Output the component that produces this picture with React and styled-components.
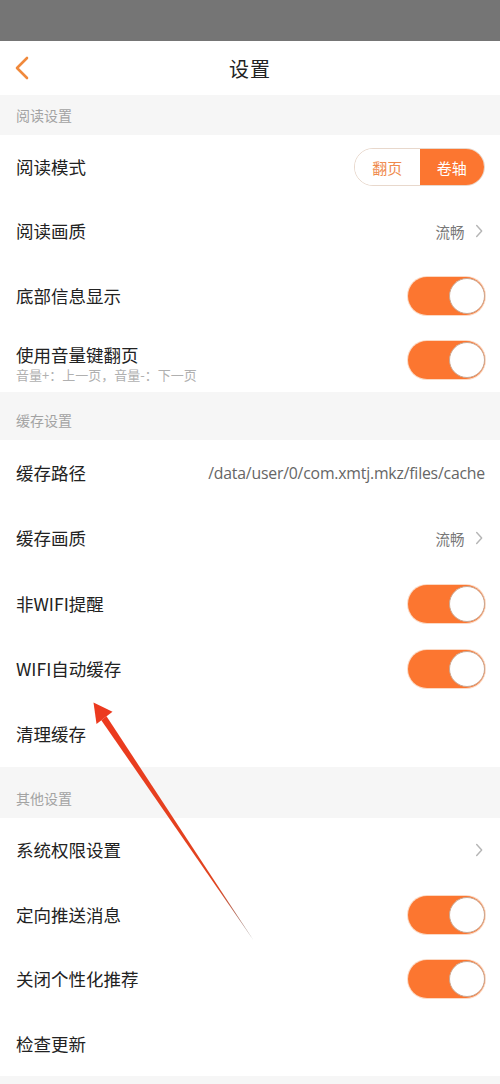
import React from "react";
import styled, { createGlobalStyle } from "styled-components";

const GlobalStyle = createGlobalStyle`
  html, body {
    margin: 0;
    padding: 0;
    background: #f6f6f6;
  }
  body {
    font-family: "Noto Sans CJK SC", "Noto Sans", sans-serif;
  }
`;

const ORANGE = "#fc7630";

const sections = [
  {
    title: "阅读设置",
    gap: 0,
    rowHeight: 64.3,
    rows: [
      { label: "阅读模式", type: "segment" },
      { label: "阅读画质", type: "value", value: "流畅" },
      { label: "底部信息显示", type: "toggle" },
      { label: "使用音量键翻页", sub: "音量+：上一页，音量-：下一页", type: "toggle" },
    ],
  },
  {
    title: "缓存设置",
    gap: 8,
    rowHeight: 65.4,
    rows: [
      { label: "缓存路径", type: "path", value: "/data/user/0/com.xmtj.mkz/files/cache" },
      { label: "缓存画质", type: "value", value: "流畅" },
      { label: "非WIFI提醒", type: "toggle" },
      { label: "WIFI自动缓存", type: "toggle" },
      { label: "清理缓存" },
    ],
  },
  {
    title: "其他设置",
    gap: 11,
    rowHeight: 64.5,
    rows: [
      { label: "系统权限设置", type: "chevron" },
      { label: "定向推送消息", type: "toggle" },
      { label: "关闭个性化推荐", type: "toggle" },
      { label: "检查更新" },
    ],
  },
];

const Chevron = ({ color = "#b5b5b5", size = 14 }) => (
  <svg width={size * 0.6} height={size} viewBox="0 0 8 14" fill="none">
    <path d="M1.5 1.5 L6.5 7 L1.5 12.5" stroke={color} strokeWidth="1.4" strokeLinecap="round" strokeLinejoin="round" />
  </svg>
);

const App = () => {
  return (
    <Page>
      <GlobalStyle />
      <StatusBar />
      <Header>
        <BackButton>
          <svg width="16" height="24" viewBox="0 0 16 24" fill="none">
            <path d="M13 2 L3 12 L13 22" stroke="#f0893c" strokeWidth="2.6" strokeLinecap="round" strokeLinejoin="round" />
          </svg>
        </BackButton>
        <Title>设置</Title>
      </Header>
      {sections.map((section) => (
        <Section key={section.title}>
          <SectionTitle $gap={section.gap}>{section.title}</SectionTitle>
          <List>
            {section.rows.map((row) => (
              <Row key={row.label} $h={section.rowHeight}>
                <LabelBlock>
                  <Label>{row.label}</Label>
                  {row.sub && <Sub>{row.sub}</Sub>}
                </LabelBlock>
                {row.type === "segment" && (
                  <Segment>
                    <SegItem>翻页</SegItem>
                    <SegItem $active>卷轴</SegItem>
                  </Segment>
                )}
                {row.type === "value" && (
                  <Value>
                    {row.value}
                    <Chevron />
                  </Value>
                )}
                {row.type === "chevron" && (
                  <Value>
                    <Chevron />
                  </Value>
                )}
                {row.type === "path" && <Path>{row.value}</Path>}
                {row.type === "toggle" && (
                  <Toggle>
                    <Knob />
                  </Toggle>
                )}
              </Row>
            ))}
          </List>
        </Section>
      ))}
      <Footer />
      <Arrow width="500" height="1084" viewBox="0 0 500 1084">
        <defs>
          <linearGradient id="shaft" x1="104" y1="718" x2="254" y2="941" gradientUnits="userSpaceOnUse">
            <stop offset="0" stopColor="#ec3a1f" />
            <stop offset="0.75" stopColor="#e0441f" />
            <stop offset="1" stopColor="#8a8a8a" />
          </linearGradient>
        </defs>
        <polygon points="106.5,716.3 101.3,720.2 254,941" fill="url(#shaft)" />
        <polygon points="93.5,702.5 112.5,711.8 96.5,724" fill="#ec3a1f" />
      </Arrow>
    </Page>
  );
};

export default App;

const Page = styled.div`
  position: relative;
  width: 500px;
  height: 1084px;
  overflow: hidden;
  background: #f6f6f6;
`;

const StatusBar = styled.div`
  height: 41px;
  background: #757575;
`;

const Header = styled.div`
  height: 54px;
  background: #fff;
  display: flex;
  align-items: center;
  justify-content: center;
  position: relative;
`;

const BackButton = styled.div`
  position: absolute;
  left: 14px;
  top: 15px;
  display: flex;
`;

const Title = styled.div`
  font-size: 20px;
  color: #222;
  letter-spacing: 1px;
`;

const Section = styled.div`
  display: flex;
  flex-direction: column;
`;

const SectionTitle = styled.div`
  height: 40px;
  padding-top: ${(p) => p.$gap}px;
  padding-left: 16px;
  display: flex;
  align-items: center;
  font-size: 14px;
  color: #a3a3a3;
  background: #f6f6f6;
`;

const List = styled.div`
  background: #fff;
  display: flex;
  flex-direction: column;
`;

const Row = styled.div`
  height: ${(p) => p.$h}px;
  display: flex;
  align-items: center;
  justify-content: space-between;
  padding: 0 15px 0 16px;
  box-sizing: border-box;
`;

const LabelBlock = styled.div`
  display: flex;
  flex-direction: column;
`;

const Label = styled.div`
  font-size: 17.5px;
  color: #222;
  line-height: 24px;
`;

const Sub = styled.div`
  font-size: 13px;
  color: #b0b0b0;
  line-height: 16px;
  margin-bottom: -6px;
`;

const Segment = styled.div`
  display: flex;
  width: 131px;
  height: 38px;
  border: 1px solid #e8d8cc;
  border-radius: 19px;
  overflow: hidden;
  box-sizing: border-box;
`;

const SegItem = styled.div`
  flex: 1;
  display: flex;
  align-items: center;
  justify-content: center;
  font-size: 15px;
  color: ${(p) => (p.$active ? "#fff" : "#ef8a4c")};
  background: ${(p) => (p.$active ? ORANGE : "#fff")};
`;

const Value = styled.div`
  display: flex;
  align-items: center;
  gap: 10px;
  font-size: 14.5px;
  color: #777;
  padding-right: 2px;
`;

const Path = styled.div`
  font-family: "Open Sans", "Noto Sans", sans-serif;
  font-size: 15.8px;
  color: #666;
  letter-spacing: -0.2px;
`;

const Toggle = styled.div`
  width: 77px;
  height: 38px;
  border-radius: 19px;
  background: ${ORANGE};
  display: flex;
  align-items: center;
  justify-content: flex-end;
  box-sizing: border-box;
  box-shadow: 0 0 0 1px #fbd9c4;
`;

const Knob = styled.div`
  width: 36px;
  height: 36px;
  border-radius: 50%;
  background: #fff;
  border: 1.5px solid #c9a893;
  box-sizing: border-box;
`;

const Footer = styled.div`
  height: 10px;
  background: #f6f6f6;
`;

const Arrow = styled.svg`
  position: absolute;
  left: 0;
  top: 0;
  pointer-events: none;
`;
